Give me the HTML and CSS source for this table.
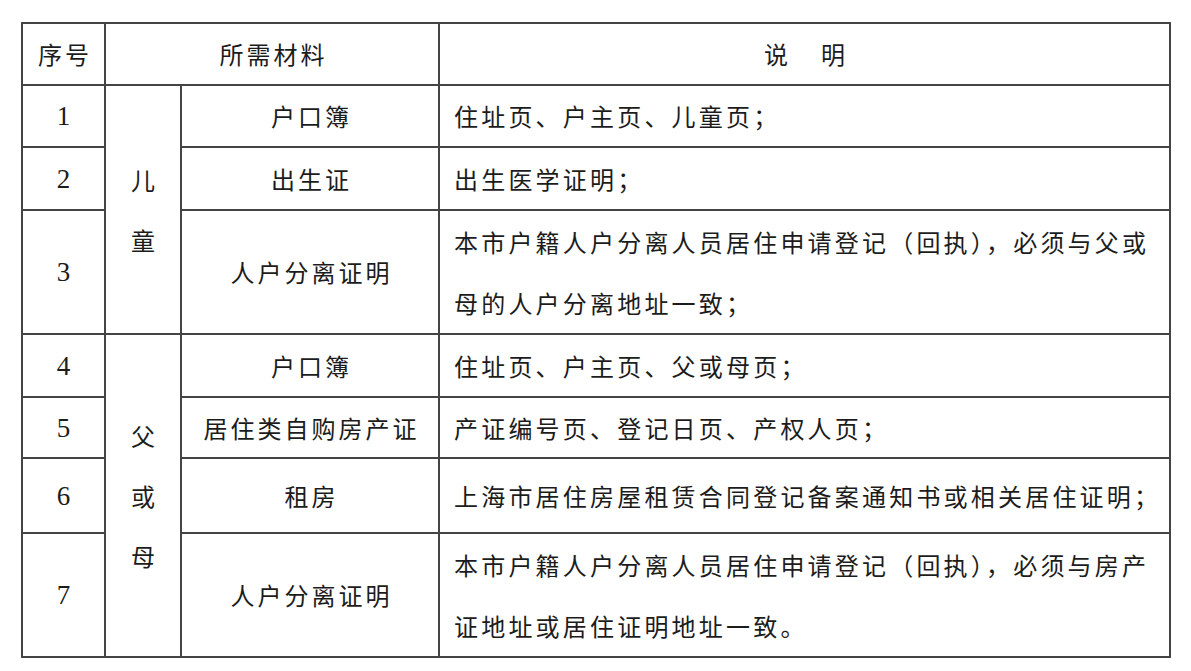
FILE: index.html
```html
<!DOCTYPE html>
<html lang="zh-CN">
<head>
<meta charset="utf-8">
<title>所需材料</title>
<link rel="stylesheet" href="styles.css">
</head>
<body>
<table class="req">
  <colgroup>
    <col class="c-no">
    <col class="c-who">
    <col class="c-mat">
    <col class="c-desc">
  </colgroup>
  <thead>
    <tr class="r-head">
      <th class="cn">序号</th>
      <th class="cm" colspan="2">所需材料</th>
      <th class="wide">说明</th>
    </tr>
  </thead>
  <tbody>
    <tr class="r-1">
      <td class="num">1</td>
      <td class="who" rowspan="3">儿<br>童</td>
      <td class="mat">户口簿</td>
      <td class="desc">住址页、户主页、儿童页；</td>
    </tr>
    <tr class="r-2">
      <td class="num">2</td>
      <td class="mat">出生证</td>
      <td class="desc">出生医学证明；</td>
    </tr>
    <tr class="r-3">
      <td class="num">3</td>
      <td class="mat">人户分离证明</td>
      <td class="desc">本市户籍人户分离人员居住申请登记（回执），必须与父或母的人户分离地址一致；</td>
    </tr>
    <tr class="r-4">
      <td class="num">4</td>
      <td class="who" rowspan="4">父<br>或<br>母</td>
      <td class="mat">户口簿</td>
      <td class="desc">住址页、户主页、父或母页；</td>
    </tr>
    <tr class="r-5">
      <td class="num">5</td>
      <td class="mat">居住类自购房产证</td>
      <td class="desc">产证编号页、登记日页、产权人页；</td>
    </tr>
    <tr class="r-6">
      <td class="num">6</td>
      <td class="mat">租房</td>
      <td class="desc">上海市居住房屋租赁合同登记备案通知书或相关居住证明；</td>
    </tr>
    <tr class="r-7">
      <td class="num">7</td>
      <td class="mat">人户分离证明</td>
      <td class="desc">本市户籍人户分离人员居住申请登记（回执），必须与房产证地址或居住证明地址一致。</td>
    </tr>
  </tbody>
</table>
</body>
</html>
```
FILE: styles.css
```css
html, body {
  margin: 0;
  padding: 0;
  background: #ffffff;
}

body {
  padding: 22px 0 0 21px;
  font-family: "Liberation Serif", "Noto Sans CJK SC", serif;
  color: #1c1c1c;
}

.req {
  border-collapse: collapse;
  table-layout: fixed;
  width: 1148px;
}

.c-no { width: 83px; }
.c-who { width: 76px; }
.c-mat { width: 258px; }
.c-desc { width: 731px; }

.req th,
.req td {
  border: 2px solid #444444;
  padding: 0;
  vertical-align: middle;
  font-size: 24px;
  font-weight: 400;
  text-align: center;
  line-height: 40px;
  font-family: "Noto Sans CJK SC", sans-serif;
}

.req th.cn,
.req th.cm,
.req td.mat {
  letter-spacing: 3px;
  padding-left: 3px;
}

.req th.wide {
  letter-spacing: 33px;
  padding-left: 33px;
}

.req td.num {
  font-family: "Liberation Serif", serif;
  font-size: 27px;
}

.req td.who {
  line-height: 60px;
}

.req td.desc {
  text-align: left;
  padding-left: 14px;
  padding-right: 0;
  letter-spacing: 3.2px;
}

.r-3 td.desc,
.r-7 td.desc {
  line-height: 61px;
}

.r-head { height: 62px; }
.r-1 { height: 62px; }
.r-2 { height: 63px; }
.r-3 { height: 123px; }
.r-4 { height: 63px; }
.r-5 { height: 61px; }
.r-6 { height: 75px; }
.r-7 { height: 122px; }
```
